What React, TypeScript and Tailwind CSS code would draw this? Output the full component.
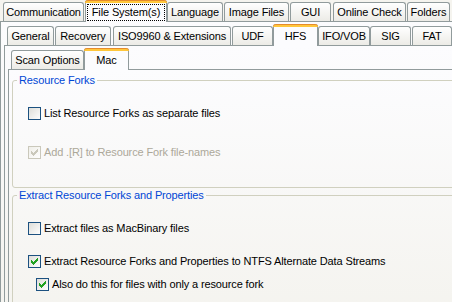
import React from "react";

type TabDef = { label: string; cls: string; sel?: boolean; focus?: boolean };

function Tab({ label, cls, sel, focus }: TabDef) {
  if (sel) {
    return (
      <div
        className={`relative z-10 -mb-px flex h-[22px] flex-col rounded-t-[3px] border-x border-[#919B9C] bg-[#FCFCFE] ${cls}`}
      >
        <div className="-mx-px h-[3px] rounded-t-[3px] border-t border-[#E68B2C] bg-[#FFC73C]" />
        <div className="flex flex-1 px-px pt-px pb-px">
          <div
            className={`flex flex-1 items-center justify-center leading-[13px] ${
              focus ? "border border-dotted border-black" : "border border-transparent"
            }`}
          >
            {label}
          </div>
        </div>
      </div>
    );
  }
  return (
    <div
      className={`flex h-[19px] items-center justify-center rounded-t-[3px] border border-b-0 border-[#919B9C] bg-linear-to-b from-white to-[#ECEBE6] pt-px leading-[13px] ${cls}`}
    >
      {label}
    </div>
  );
}

function TabRow({ tabs }: { tabs: TabDef[] }) {
  return (
    <div className="flex h-[21px] items-end whitespace-nowrap">
      {tabs.map((t) => (
        <Tab key={t.label} {...t} />
      ))}
    </div>
  );
}

const CHECK_PIXELS: [number, number][] = [
  [6, 0],
  [5, 1],
  [6, 1],
  [0, 2],
  [4, 2],
  [5, 2],
  [6, 2],
  [0, 3],
  [1, 3],
  [3, 3],
  [4, 3],
  [5, 3],
  [0, 4],
  [1, 4],
  [2, 4],
  [3, 4],
  [4, 4],
  [1, 5],
  [2, 5],
  [3, 5],
  [2, 6],
];

function CheckBox({ id, checked, disabled }: { id: string; checked?: boolean; disabled?: boolean }) {
  const stroke = disabled ? "#CAC8BB" : "#1C5180";
  const from = disabled ? "#EFEEE8" : "#DCDCD7";
  const mark = disabled ? "#CAC8BB" : "#21A121";
  return (
    <svg width="13" height="13" viewBox="0 0 13 13" shapeRendering="crispEdges" className="shrink-0">
      <defs>
        <linearGradient id={id} x1="0" y1="0" x2="1" y2="1">
          <stop offset="0" stopColor={from} />
          <stop offset="1" stopColor="#FFFFFF" />
        </linearGradient>
      </defs>
      <rect x="0.5" y="0.5" width="12" height="12" fill={`url(#${id})`} stroke={stroke} />
      {checked &&
        CHECK_PIXELS.map(([x, y]) => (
          <rect key={`${x}-${y}`} x={3 + x} y={3 + y} width="1" height="1" fill={mark} />
        ))}
    </svg>
  );
}

function Option({
  id,
  label,
  checked,
  disabled,
  cls,
}: {
  id: string;
  label: string;
  checked?: boolean;
  disabled?: boolean;
  cls: string;
}) {
  return (
    <div className={`flex h-[13px] items-center gap-[3px] whitespace-nowrap leading-[13px] ${cls}`}>
      <CheckBox id={id} checked={checked} disabled={disabled} />
      <span className={disabled ? "text-[#ACA899]" : "text-black"}>{label}</span>
    </div>
  );
}

export default function App() {
  const row1: TabDef[] = [
    { label: "Communication", cls: "ml-[3px] w-[81px]" },
    { label: "File System(s)", cls: "ml-[1px] w-[82px]", sel: true, focus: true },
    { label: "Language", cls: "w-[56px]" },
    { label: "Image Files", cls: "ml-[1px] w-[65px]" },
    { label: "GUI", cls: "ml-[1px] w-[41px]" },
    { label: "Online Check", cls: "ml-[2px] w-[73px]" },
    { label: "Folders", cls: "ml-[1px] w-[43px]" },
  ];
  const row2: TabDef[] = [
    { label: "General", cls: "ml-[6px] w-[47px]" },
    { label: "Recovery", cls: "ml-[1px] w-[56px]" },
    { label: "ISO9960 & Extensions", cls: "ml-[2px] w-[118px]" },
    { label: "UDF", cls: "ml-[1px] w-[41px]" },
    { label: "HFS", cls: "w-[45px]", sel: true },
    { label: "IFO/VOB", cls: "w-[52px]" },
    { label: "SIG", cls: "w-[41px]" },
    { label: "FAT", cls: "ml-[1px] w-[40px]" },
  ];
  const row3: TabDef[] = [
    { label: "Scan Options", cls: "ml-[6px] w-[73px]" },
    { label: "Mac", cls: "w-[45px]", sel: true },
  ];

  return (
    <div className="h-[302px] w-[452px] overflow-hidden bg-[#F5F4EF] font-['Liberation_Sans',Arial,sans-serif] text-[11px] tracking-[-0.13px] text-black">
      <TabRow tabs={row1} />
      <div className="h-[300px] w-[480px] border-l border-t border-[#919B9C] bg-linear-to-b from-[#FCFCFE] to-[#F4F3EE] pt-[2px]">
        <TabRow tabs={row2} />
        <div className="ml-[3px] h-[280px] w-[470px] border-l border-t border-[#919B9C] bg-linear-to-b from-[#FCFCFE] to-[#F4F3EE] pt-[2px]">
          <TabRow tabs={row3} />
          <div className="ml-[3px] h-[260px] w-[460px] border-l border-t border-[#919B9C] bg-linear-to-b from-[#FCFCFE] to-[#F4F3EE] pt-[4px]">
            <fieldset className="ml-[3px] h-[114px] w-[450px] rounded-[3px] border border-[#D0D0BF]">
              <legend className="ml-[4px] px-[2px] leading-[12px] text-[#0046D5]">Resource Forks</legend>
              <Option id="cb1" label="List Resource Forks as separate files" cls="ml-[15px] mt-[21px]" />
              <Option
                id="cb2"
                label="Add .[R] to Resource Fork file-names"
                checked
                disabled
                cls="ml-[15px] mt-[26px]"
              />
            </fieldset>
            <fieldset className="ml-[3px] mt-[1px] h-[140px] w-[450px] rounded-[3px] border border-[#D0D0BF]">
              <legend className="ml-[4px] px-[2px] leading-[12px] text-[#0046D5]">
                Extract Resource Forks and Properties
              </legend>
              <Option id="cb3" label="Extract files as MacBinary files" cls="ml-[15px] mt-[21px]" />
              <Option
                id="cb4"
                label="Extract Resource Forks and Properties to NTFS Alternate Data Streams"
                checked
                cls="ml-[15px] mt-[20px]"
              />
              <Option
                id="cb5"
                label="Also do this for files with only a resource fork"
                checked
                cls="ml-[23px] mt-[10px]"
              />
            </fieldset>
          </div>
        </div>
      </div>
    </div>
  );
}
